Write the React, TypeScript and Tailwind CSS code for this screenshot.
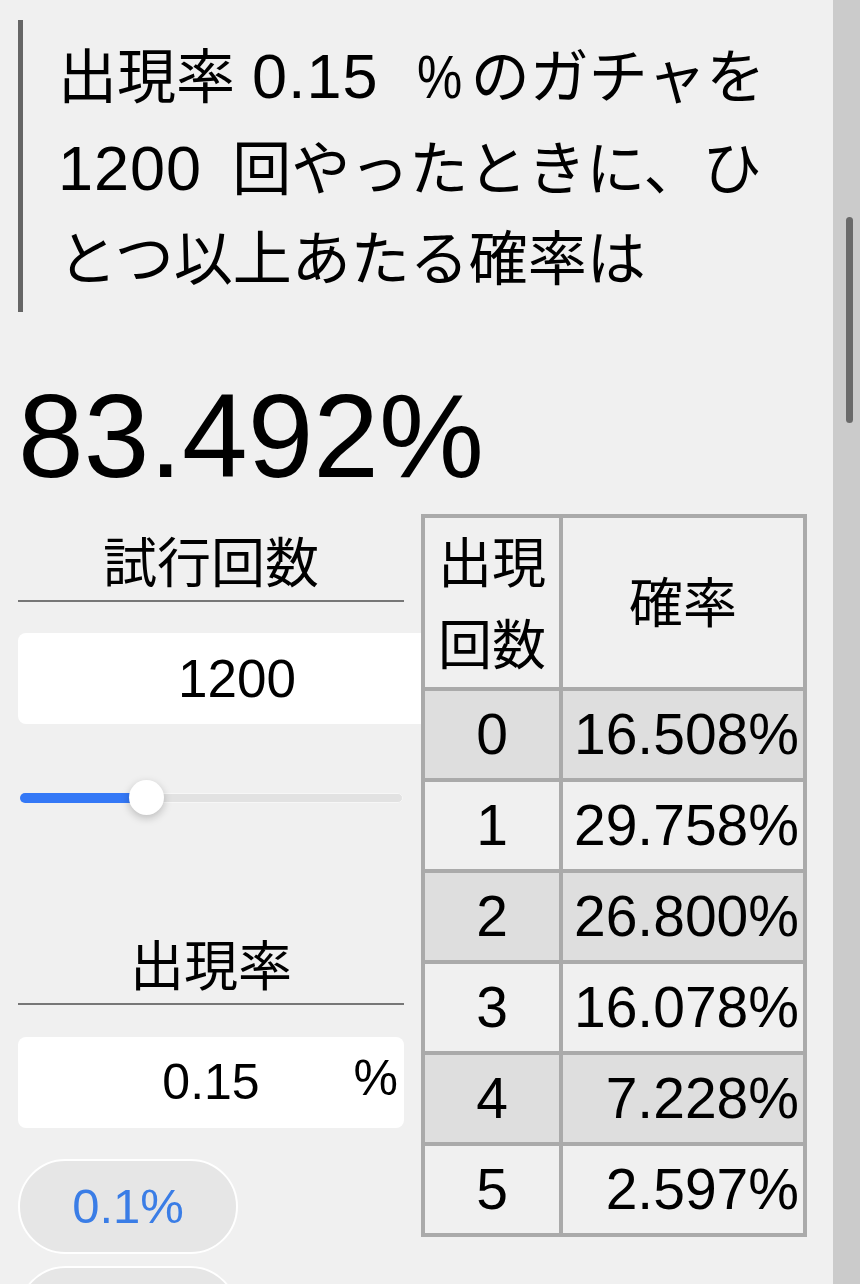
const rows = [
  ["0", "16.508%"],
  ["1", "29.758%"],
  ["2", "26.800%"],
  ["3", "16.078%"],
  ["4", "7.228%"],
  ["5", "2.597%"],
];

function Heading({ label }: { label: string }) {
  return (
    <div className="h-[88px] border-b-2 border-[#777777] pt-[12px] text-center text-[54px] leading-[76px]">
      {label}
    </div>
  );
}

export default function App() {
  return (
    <div className="flex h-[1284px] w-[860px] overflow-hidden bg-[#f0f0f0] font-['Liberation_Sans','Noto_Sans_CJK_JP',sans-serif] text-black">
      <main className="w-[833px] shrink-0 pl-[18px] pt-[20px]">
        <blockquote className="border-l-[5px] border-[#666666] py-[8px] pl-[35px] text-[59px]">
          <span className="block h-[92px] whitespace-nowrap pt-[4px] leading-[88px]">
            出現率
            <span className="ml-[17px] text-[63px] tracking-[1px]">0.15</span>
            <span className="ml-[33px] inline-block scale-x-[0.82] text-[62px]">%</span>
            <span className="ml-[4px]">のガチャを</span>
          </span>
          <span className="block h-[92px] whitespace-nowrap pt-[4px] leading-[88px]">
            <span className="text-[63px] tracking-[1px]">1200</span>
            <span className="ml-[30px]">回やったときに、ひ</span>
          </span>
          <span className="block h-[92px] whitespace-nowrap pt-[4px] leading-[88px]">とつ以上あたる確率は</span>
        </blockquote>

        <div className="mt-[66px] h-[116px] text-[118px] leading-[116px]">83.492%</div>

        <div className="mt-[20px] flex gap-[17px]">
          <div className="w-[386px] shrink-0">
            <Heading label="試行回数" />
            <div className="mt-[31px] flex h-[91px] w-[438px] items-center justify-center rounded-[8px] bg-white text-[53px]">
              1200
            </div>

            <div className="mt-[56px] flex h-[36px] items-center pl-[2px] pr-[1px]">
              <div className="relative h-[10px] w-full rounded-full border border-[#f7f7f7] bg-[#e2e2e2]">
                <div className="absolute -left-px -top-px h-[10px] w-[126px] rounded-full bg-[#3478f6]" />
                <div className="absolute left-[108px] top-[-14px] h-[35px] w-[35px] rounded-full bg-white shadow-[0_3px_8px_rgba(0,0,0,0.22)]" />
              </div>
            </div>

            <div className="mt-[101px]">
              <Heading label="出現率" />
            </div>
            <div className="relative mt-[32px] flex h-[91px] items-center justify-center rounded-[8px] bg-white text-[50px]">
              0.15
              <span className="absolute right-[6px] top-[4px] text-[50px]">%</span>
            </div>

            <button className="mt-[31px] flex h-[95px] w-[220px] items-center justify-center rounded-full border-2 border-white bg-[#e6e6e6] text-[49px] text-[#3a7de6]">
              0.1%
            </button>
            <button aria-label="1%" className="mt-[12px] block h-[95px] w-[220px] rounded-full border-2 border-white bg-[#e6e6e6]" />
          </div>

          <table className="relative z-10 w-[386px] shrink-0 table-fixed border-separate border-spacing-[4px] self-start bg-[#aaaaaa]">
            <colgroup>
              <col className="w-[134px]" />
              <col className="w-[240px]" />
            </colgroup>
            <thead>
              <tr>
                <th className="h-[169px] bg-[#f0f0f0] p-0 pt-[4px] text-[54px] font-normal leading-[82px]">
                  出現
                  <br />
                  回数
                </th>
                <th className="h-[169px] bg-[#f0f0f0] p-0 pt-[4px] text-[54px] font-normal">確率</th>
              </tr>
            </thead>
            <tbody>
              {rows.map(([n, p], i) => (
                <tr key={n} className={i % 2 === 0 ? "bg-[#dedede]" : "bg-[#f0f0f0]"}>
                  <td className="h-[87px] p-0 text-center text-[57px] leading-[87px]">{n}</td>
                  <td className="h-[87px] p-0 pr-[4px] text-right text-[57px] leading-[87px]">{p}</td>
                </tr>
              ))}
            </tbody>
          </table>
        </div>
      </main>

      <div className="relative flex-1 bg-[#cbcbcb]">
        <div className="absolute left-[13px] top-[217px] h-[206px] w-[7px] rounded-full bg-[#6a6a6a]" />
      </div>
    </div>
  );
}
